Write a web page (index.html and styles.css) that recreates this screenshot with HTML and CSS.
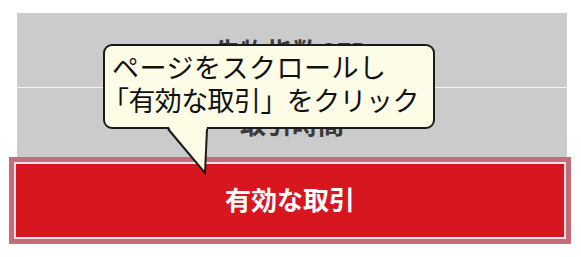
FILE: index.html
```html
<!DOCTYPE html>
<html lang="ja">
<head>
    <meta charset="utf-8">
    <title>有効な取引</title>
    <link rel="stylesheet" href="styles.css">
</head>
<body>
    <div class="page">
        <div class="menu">
            <div class="menu-row first">先物指数CFD</div>
            <div class="menu-row">取引時間</div>
        </div>
        <button class="action">有効な取引</button>

        <div class="callout">
            <p class="line-one">ページをスクロールし</p>
            <p class="line-two">「有効な取引」をクリック</p>
        </div>
        <svg class="callout-tail" width="48" height="52" viewBox="0 0 48 52">
            <polygon points="3,0 40,47 42,0" fill="#fdfce7" />
            <polyline points="3,3 40,47 42,3" fill="none" stroke="#1a1a1a" stroke-width="2" stroke-linejoin="miter" />
        </svg>
    </div>
</body>
</html>
```

FILE: styles.css
```css
* {
    margin: 0;
    padding: 0;
    box-sizing: border-box;
}

body {
    background-color: #ffffff;
    font-family: "Noto Sans CJK JP", "Noto Sans", sans-serif;
}

.page {
    position: relative;
    width: 581px;
    height: 257px;
    padding-top: 13px;
}

.menu {
    margin-left: 17px;
    width: 550px;
    background-color: #cbcbcb;
}

.menu-row {
    display: flex;
    align-items: center;
    justify-content: center;
    height: 69px;
    font-size: 26px;
    font-weight: bold;
    color: #3a3a3a;
}

.menu-row.first {
    height: 75px;
    border-bottom: 1px solid #f4f4f4;
}

.action {
    display: flex;
    align-items: center;
    justify-content: center;
    margin-left: 9px;
    width: 562px;
    height: 87px;
    border: 5px solid #c66b7a;
    box-shadow: inset 0 0 0 2px #f7e3e6;
    background-color: #d7161f;
    color: #ffffff;
    font-family: "Noto Sans CJK JP", "Noto Sans", sans-serif;
    font-size: 26px;
    font-weight: bold;
    padding-bottom: 4px;
}

/* speech bubble lies over the menu */
.callout {
    position: absolute;
    left: 103px;
    top: 44px;
    width: 332px;
    height: 85px;
    padding: 4px 0 0 7px;
    border: 2px solid #1a1a1a;
    border-radius: 9px;
    background-color: #fdfce7;
    color: #111111;
    font-size: 27px;
    line-height: 33px;
    white-space: nowrap;
}

.callout .line-one {
    letter-spacing: 0.5px;
}

.callout .line-two {
    margin-left: -10px;
    letter-spacing: -0.6px;
}

.callout-tail {
    position: absolute;
    left: 165px;
    top: 126px;
}
```
